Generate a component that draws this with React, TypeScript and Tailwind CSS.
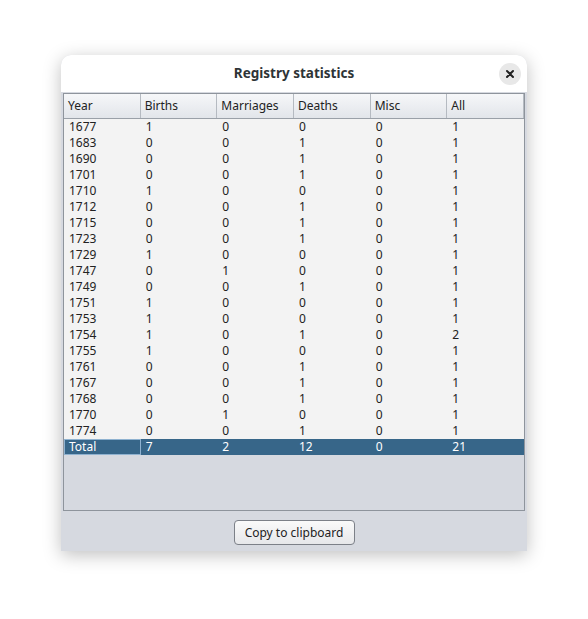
const rows: string[][] = [
  ["1677", "1", "0", "0", "0", "1"],
  ["1683", "0", "0", "1", "0", "1"],
  ["1690", "0", "0", "1", "0", "1"],
  ["1701", "0", "0", "1", "0", "1"],
  ["1710", "1", "0", "0", "0", "1"],
  ["1712", "0", "0", "1", "0", "1"],
  ["1715", "0", "0", "1", "0", "1"],
  ["1723", "0", "0", "1", "0", "1"],
  ["1729", "1", "0", "0", "0", "1"],
  ["1747", "0", "1", "0", "0", "1"],
  ["1749", "0", "0", "1", "0", "1"],
  ["1751", "1", "0", "0", "0", "1"],
  ["1753", "1", "0", "0", "0", "1"],
  ["1754", "1", "0", "1", "0", "2"],
  ["1755", "1", "0", "0", "0", "1"],
  ["1761", "0", "0", "1", "0", "1"],
  ["1767", "0", "0", "1", "0", "1"],
  ["1768", "0", "0", "1", "0", "1"],
  ["1770", "0", "1", "0", "0", "1"],
  ["1774", "0", "0", "1", "0", "1"],
];
const headers = ["Year", "Births", "Marriages", "Deaths", "Misc", "All"];
const total = ["Total", "7", "2", "12", "0", "21"];

export default function App() {
  return (
    <div className="w-[588px] h-[619px] bg-white pt-[55px] pl-[61px]" style={{ fontFamily: '"Noto Sans", sans-serif' }}>
      <div className="w-[466px] h-[496px] bg-[#d6d9e0] rounded-t-[10px] shadow-[0_4px_18px_rgba(0,0,0,0.25)] flex flex-col">
        <div className="h-[37px] bg-white rounded-t-[10px] flex items-center justify-center relative">
          <span className="text-[13.5px] font-bold text-[#2e3436]">Registry statistics</span>
          <div className="absolute right-[6px] top-[8px] w-[22px] h-[22px] rounded-full bg-[#e8e8e8] flex items-center justify-center">
            <svg width="10" height="10" viewBox="0 0 10 10"><path d="M2 2L8 8M8 2L2 8" stroke="#222" strokeWidth="2" strokeLinecap="round" /></svg>
          </div>
        </div>
        <div className="mx-[2px] mt-[1px] h-[418px] border border-[#8e949c] bg-[#d6d9e0] flex flex-col">
          <div className="grid grid-cols-6 h-[25px] bg-gradient-to-b from-[#f6f7f9] to-[#e2e5ea] border-b border-[#9aa0a8]">
            {headers.map((h) => (
              <div key={h} className="border-r border-[#b5bac1] pl-[4px] text-[12px] leading-[24px] text-[#222]">{h}</div>
            ))}
          </div>
          <div className="bg-[#f3f3f3]">
            {rows.map((r) => (
              <div key={r[0]} className="grid grid-cols-6 h-[16px]">
                {r.map((c, i) => (
                  <div key={i} className="pl-[5px] text-[12px] leading-[16px] text-[#222]">{c}</div>
                ))}
              </div>
            ))}
          </div>
          <div className="grid grid-cols-6 h-[16px] bg-[#376689]">
            {total.map((c, i) => (
              <div key={i} className={`pl-[5px] text-[12px] leading-[16px] text-white ${i === 0 ? "outline outline-1 -outline-offset-1 outline-[#8fb2d0]" : ""}`}>{c}</div>
            ))}
          </div>
        </div>
        <div className="flex justify-center mt-[9px]">
          <button className="w-[121px] h-[25px] rounded-[4px] border border-[#7c8088] bg-gradient-to-b from-[#fafafa] to-[#e6e7ea] text-[12px] text-[#222]">Copy to clipboard</button>
        </div>
      </div>
    </div>
  );
}
